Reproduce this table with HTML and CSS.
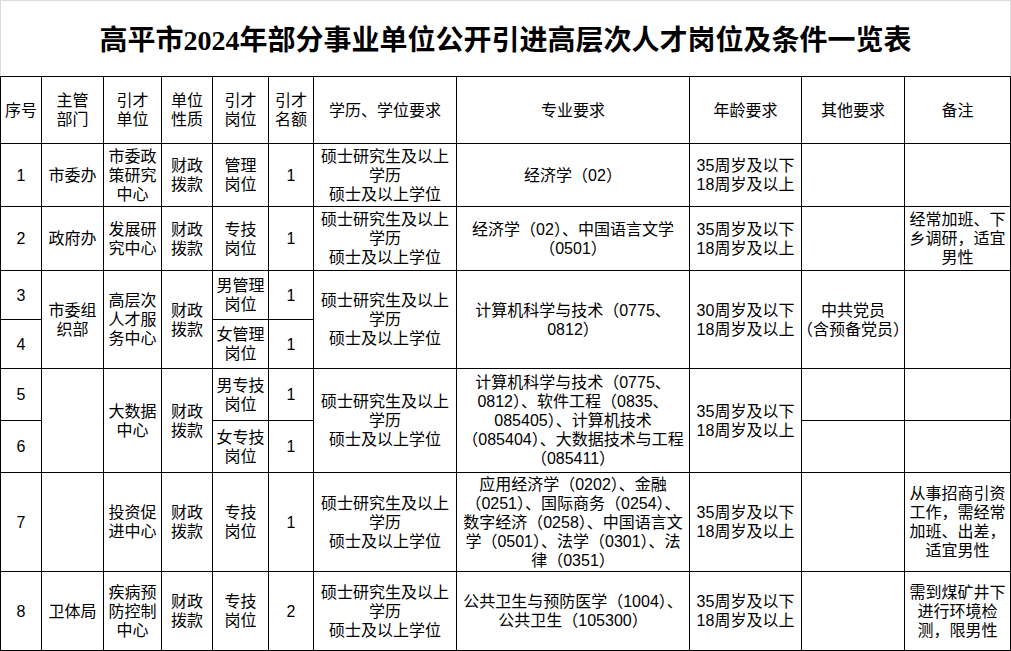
FILE: index.html
```html
<!DOCTYPE html>
<html lang="zh-CN">
<head>
<meta charset="utf-8">
<title>高平市2024年部分事业单位公开引进高层次人才岗位及条件一览表</title>
<link rel="stylesheet" href="styles.css">
</head>
<body>
<div class="sheet">
  <div class="title-row">
    <h1 class="title">高平市2024年部分事业单位公开引进高层次人才岗位及条件一览表</h1>
  </div>
  <table class="grid">
    <colgroup>
      <col class="c-no"><col class="c-dept"><col class="c-unit"><col class="c-kind"><col class="c-post"><col class="c-num">
      <col class="c-edu"><col class="c-major"><col class="c-age"><col class="c-other"><col class="c-note">
    </colgroup>
    <thead>
      <tr class="r-head">
        <th>序号</th>
        <th>主管<br>部门</th>
        <th>引才<br>单位</th>
        <th>单位<br>性质</th>
        <th>引才<br>岗位</th>
        <th>引才<br>名额</th>
        <th>学历、学位要求</th>
        <th>专业要求</th>
        <th>年龄要求</th>
        <th>其他要求</th>
        <th>备注</th>
      </tr>
    </thead>
    <tbody>
      <tr class="r1">
        <td>1</td>
        <td>市委办</td>
        <td>市委政<br>策研究<br>中心</td>
        <td>财政<br>拨款</td>
        <td>管理<br>岗位</td>
        <td>1</td>
        <td>硕士研究生及以上<br>学历<br>硕士及以上学位</td>
        <td>经济学（02）</td>
        <td>35周岁及以下<br>18周岁及以上</td>
        <td></td>
        <td></td>
      </tr>
      <tr class="r2">
        <td>2</td>
        <td>政府办</td>
        <td>发展研<br>究中心</td>
        <td>财政<br>拨款</td>
        <td>专技<br>岗位</td>
        <td>1</td>
        <td>硕士研究生及以上<br>学历<br>硕士及以上学位</td>
        <td>经济学（02）、中国语言文学<br>（0501）</td>
        <td>35周岁及以下<br>18周岁及以上</td>
        <td></td>
        <td>经常加班、下<br>乡调研，适宜<br>男性</td>
      </tr>
      <tr class="r3">
        <td>3</td>
        <td rowspan="2">市委组<br>织部</td>
        <td rowspan="2">高层次<br>人才服<br>务中心</td>
        <td rowspan="2">财政<br>拨款</td>
        <td>男管理<br>岗位</td>
        <td>1</td>
        <td rowspan="2">硕士研究生及以上<br>学历<br>硕士及以上学位</td>
        <td rowspan="2">计算机科学与技术（0775、<br>0812）</td>
        <td rowspan="2">30周岁及以下<br>18周岁及以上</td>
        <td rowspan="2" class="tight">中共党员<br>（含预备党员）</td>
        <td rowspan="2"></td>
      </tr>
      <tr class="r4">
        <td>4</td>
        <td>女管理<br>岗位</td>
        <td>1</td>
      </tr>
      <tr class="r5">
        <td>5</td>
        <td rowspan="2"></td>
        <td rowspan="2">大数据<br>中心</td>
        <td rowspan="2">财政<br>拨款</td>
        <td>男专技<br>岗位</td>
        <td>1</td>
        <td rowspan="2">硕士研究生及以上<br>学历<br>硕士及以上学位</td>
        <td rowspan="2">计算机科学与技术（0775、<br>0812）、软件工程（0835、<br>085405）、计算机技术<br>（085404）、大数据技术与工程<br>（085411）</td>
        <td rowspan="2">35周岁及以下<br>18周岁及以上</td>
        <td></td>
        <td></td>
      </tr>
      <tr class="r6">
        <td>6</td>
        <td>女专技<br>岗位</td>
        <td>1</td>
        <td></td>
        <td></td>
      </tr>
      <tr class="r7">
        <td>7</td>
        <td></td>
        <td>投资促<br>进中心</td>
        <td>财政<br>拨款</td>
        <td>专技<br>岗位</td>
        <td>1</td>
        <td>硕士研究生及以上<br>学历<br>硕士及以上学位</td>
        <td>应用经济学（0202）、金融<br>（0251）、国际商务（0254）、<br>数字经济（0258）、中国语言文<br>学（0501）、法学（0301）、法<br>律（0351）</td>
        <td>35周岁及以下<br>18周岁及以上</td>
        <td></td>
        <td>从事招商引资<br>工作，需经常<br>加班、出差，<br>适宜男性</td>
      </tr>
      <tr class="r8">
        <td>8</td>
        <td>卫体局</td>
        <td>疾病预<br>防控制<br>中心</td>
        <td>财政<br>拨款</td>
        <td>专技<br>岗位</td>
        <td>2</td>
        <td>硕士研究生及以上<br>学历<br>硕士及以上学位</td>
        <td>公共卫生与预防医学（1004）、<br>公共卫生（105300）</td>
        <td>35周岁及以下<br>18周岁及以上</td>
        <td></td>
        <td>需到煤矿井下<br>进行环境检<br>测，限男性</td>
      </tr>
    </tbody>
  </table>
</div>
</body>
</html>
```

FILE: styles.css
```css
html, body {
  margin: 0;
  padding: 0;
  background: #ffffff;
}

.sheet {
  width: 1011px;
  color: #000000;
}

.title-row {
  box-sizing: border-box;
  width: 1011px;
  height: 76px;
  border: 1px solid #dcdcdc;
  border-bottom: none;
  display: flex;
  align-items: center;
  justify-content: center;
  padding-top: 4px;
}

.title {
  margin: 0;
  font-family: "Liberation Serif", "Noto Sans CJK SC", serif;
  font-size: 28px;
  font-weight: 700;
  letter-spacing: 0;
  line-height: 1;
}

.grid {
  width: 1011px;
  border-collapse: collapse;
  table-layout: fixed;
  font-family: "Liberation Sans", "Noto Sans CJK SC", sans-serif;
  font-size: 16px;
  line-height: 19px;
}

.grid th,
.grid td {
  border: 1px solid #000000;
  padding: 0 1px;
  text-align: center;
  vertical-align: middle;
  font-weight: 400;
  white-space: nowrap;
}

.grid .tight {
  font-feature-settings: "halt";
  padding: 0;
}

.c-no { width: 41px; }
.c-dept { width: 62px; }
.c-unit { width: 58px; }
.c-kind { width: 51px; }
.c-post { width: 56px; }
.c-num { width: 45px; }
.c-edu { width: 143px; }
.c-major { width: 233px; }
.c-age { width: 112px; }
.c-other { width: 103px; }
.c-note { width: 106px; }

.r-head { height: 67px; }
.r1 { height: 63px; }
.r2 { height: 64px; }
.r3 { height: 49px; }
.r4 { height: 49px; }
.r5 { height: 52px; }
.r6 { height: 52px; }
.r7 { height: 99px; }
.r8 { height: 79px; }
```
